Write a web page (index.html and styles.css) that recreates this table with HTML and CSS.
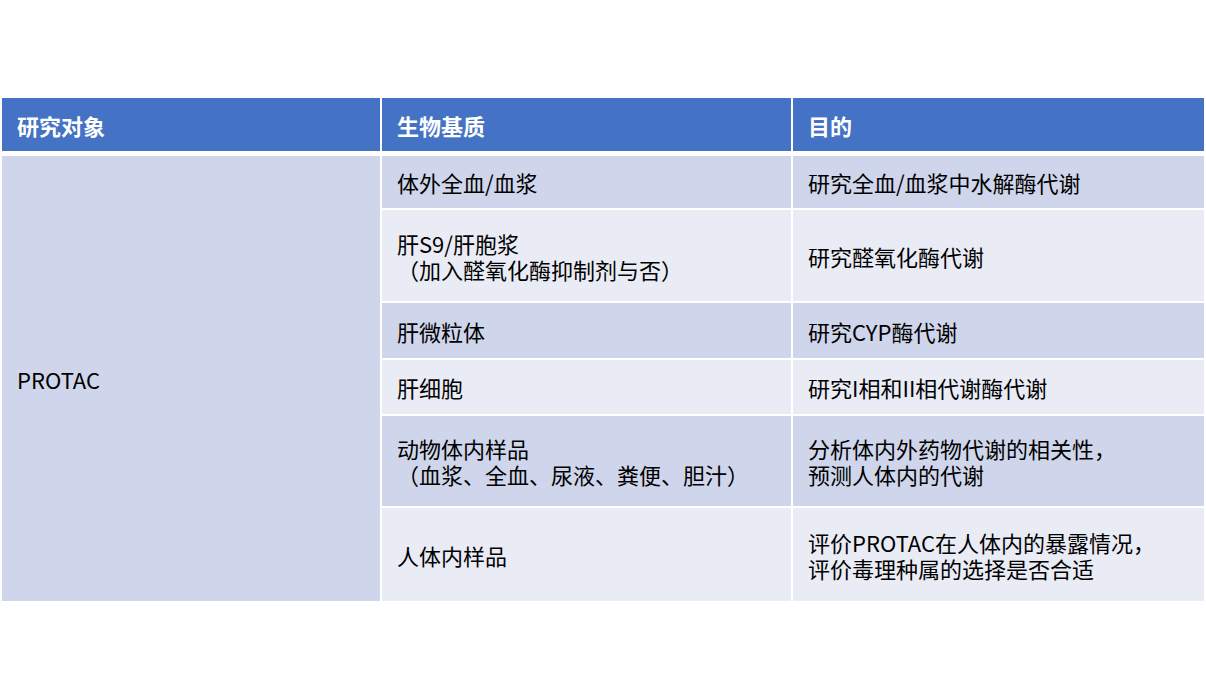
FILE: index.html
```html
<!DOCTYPE html>
<html lang="zh-CN">
<head>
<meta charset="utf-8">
<title>PROTAC</title>
<link rel="stylesheet" href="styles.css">
</head>
<body>
<div class="page">
  <div class="table">
    <div class="grid head">
      <div class="cell th">研究对象</div>
      <div class="cell th">生物基质</div>
      <div class="cell th">目的</div>
    </div>
    <div class="grid body">
      <div class="cell dark subject">PROTAC</div>

      <div class="cell dark">体外全血/血浆</div>
      <div class="cell dark">研究全血/血浆中水解酶代谢</div>

      <div class="cell light">肝S9/肝胞浆<br>（加入醛氧化酶抑制剂与否）</div>
      <div class="cell light">研究醛氧化酶代谢</div>

      <div class="cell dark">肝微粒体</div>
      <div class="cell dark">研究CYP酶代谢</div>

      <div class="cell light">肝细胞</div>
      <div class="cell light">研究I相和II相代谢酶代谢</div>

      <div class="cell dark">动物体内样品<br>（血浆、全血、尿液、粪便、胆汁）</div>
      <div class="cell dark">分析体内外药物代谢的相关性，<br>预测人体内的代谢</div>

      <div class="cell light">人体内样品</div>
      <div class="cell light">评价PROTAC在人体内的暴露情况，<br>评价毒理种属的选择是否合适</div>
    </div>
  </div>
</div>
</body>
</html>
```

FILE: styles.css
```css
html, body {
  margin: 0;
  padding: 0;
  background: #ffffff;
}

.page {
  width: 1206px;
  height: 700px;
  padding: 98px 2px 0 2px;
  box-sizing: border-box;
  font-family: "Noto Sans CJK SC", "Noto Sans", sans-serif;
  font-size: 22px;
  line-height: 26px;
  color: #000000;
}

.table {
  width: 1202px;
}

.grid {
  display: grid;
  grid-template-columns: 378px 409px 411px;
  column-gap: 2px;
}

.head {
  grid-template-rows: 53px;
}

.body {
  margin-top: 5px;
  grid-template-rows: 52px 91px 55px 54px 90px 93px;
  row-gap: 2px;
}

.cell {
  display: flex;
  align-items: center;
  padding: 0 15px;
  box-sizing: border-box;
}

.th {
  background: #4472c4;
  color: #ffffff;
  font-weight: 700;
}

.dark {
  background: #cfd5ea;
}

.light {
  background: #e9ebf5;
}

.subject {
  grid-row: 1 / 7;
  grid-column: 1;
}
```
